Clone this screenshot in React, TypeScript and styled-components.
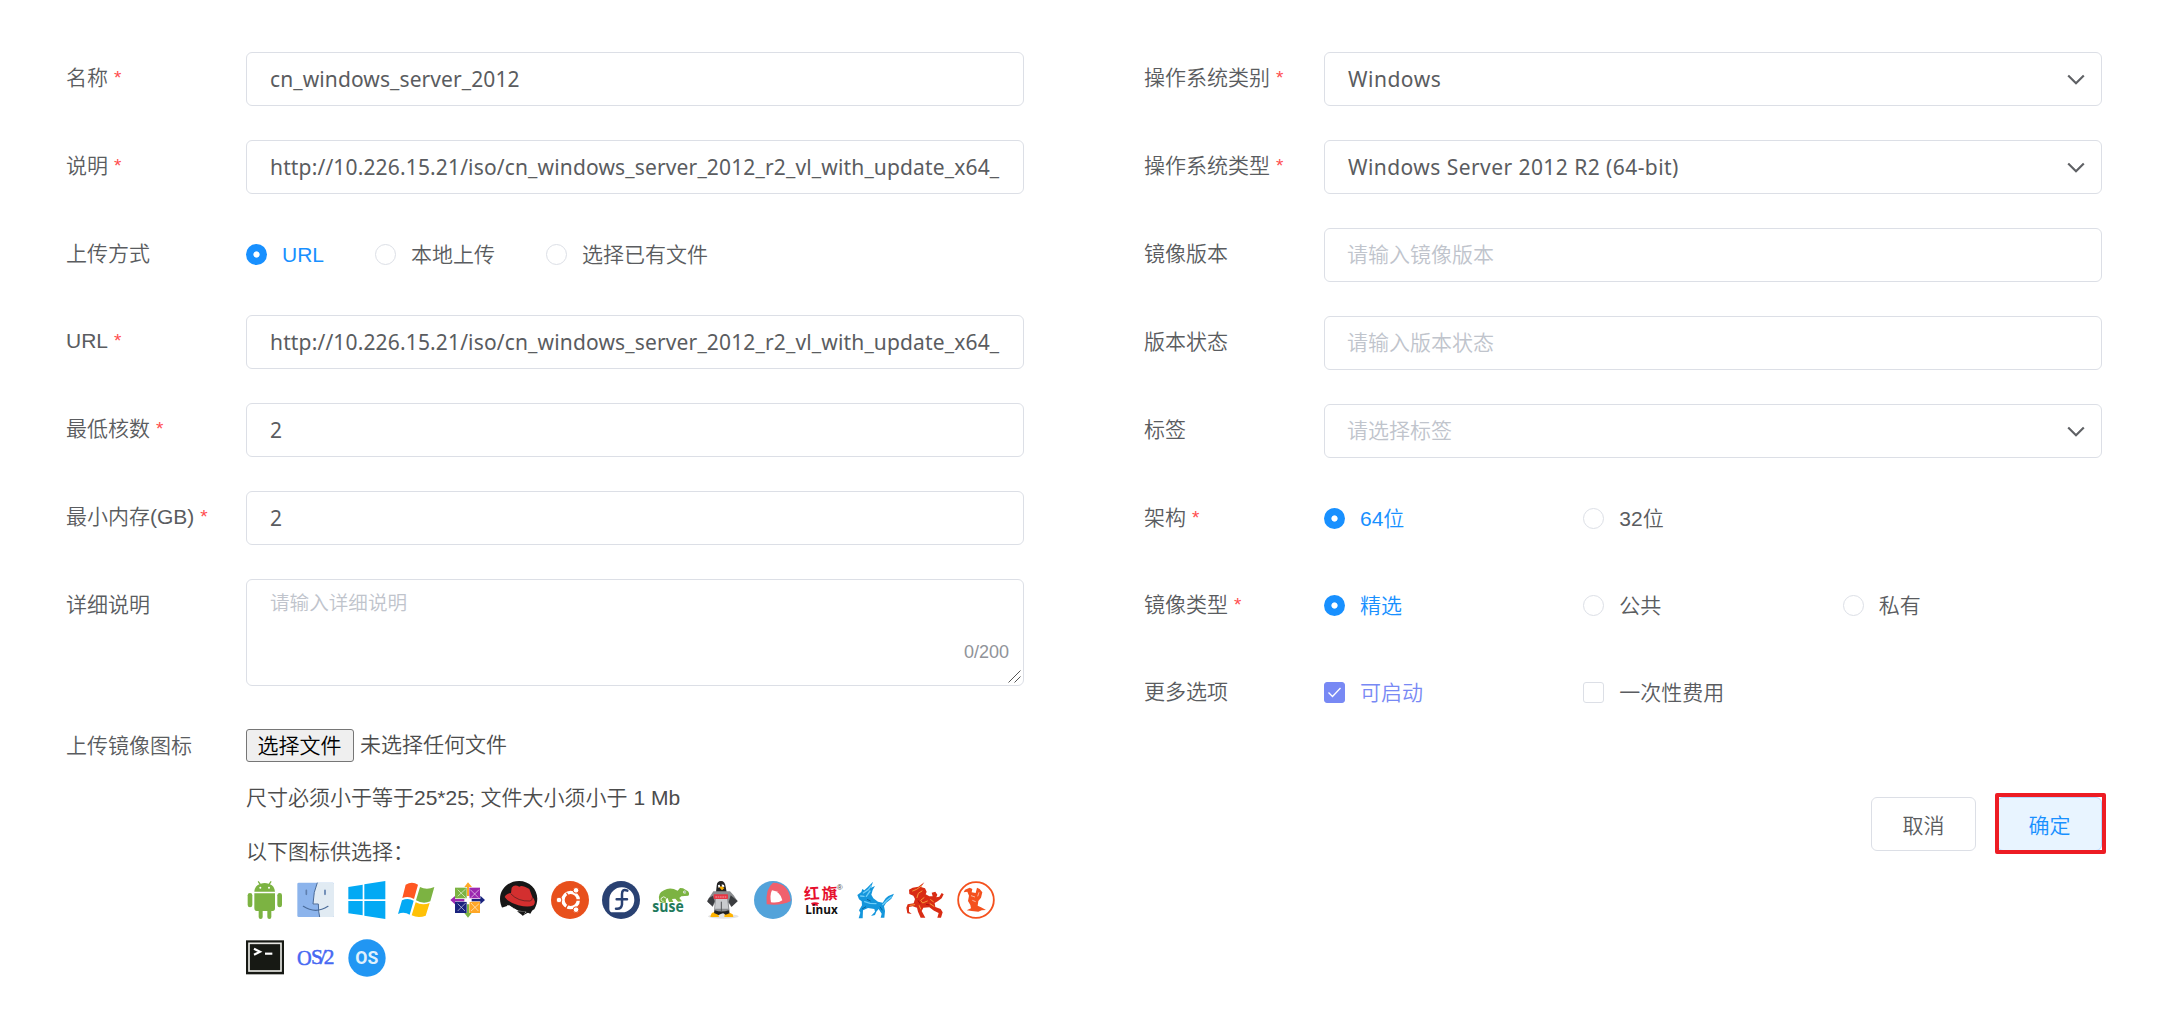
import React from 'react';
import styled, { createGlobalStyle, css } from 'styled-components';

const GlobalStyle = createGlobalStyle`
  *, *::before, *::after { box-sizing: border-box; }
  body {
    margin: 0;
    background: #fff;
    color: #5a5c60;
    font-family: "Liberation Sans", "Noto Sans CJK SC", sans-serif;
    font-size: 21px;
    font-weight: 350;
  }
`;

const Page = styled.main`
  display: grid;
  grid-template-columns: 958px 958px;
  column-gap: 120px;
  padding: 52px 74px 0 66px;
`;

const Column = styled.section`
  display: flex;
  flex-direction: column;
  gap: 34px;
`;

const Field = styled.div`
  display: grid;
  grid-template-columns: 180px 778px;
  align-items: start;
`;

const Label = styled.label`
  display: flex;
  height: 53px;
  line-height: 52px;
  white-space: nowrap;
`;

const Star = styled.span`
  color: #ff4d4f;
  font-size: 19px;
  line-height: 51px;
  margin-left: 6px;
`;

const Box = styled.div<{ $placeholder?: boolean; $tracking?: string }>`
  display: flex;
  align-items: center;
  justify-content: space-between;
  height: 54px;
  padding: 0 16px 0 23px;
  border: 1px solid #dcdfe6;
  border-radius: 6px;
  overflow: hidden;
  white-space: nowrap;
  font-family: "Noto Sans", "Noto Sans CJK SC", sans-serif;
  font-weight: 400;
  letter-spacing: ${(p) => p.$tracking ?? '0.15px'};
  ${(p) =>
    p.$placeholder &&
    css`
      padding-left: 22px;
      color: #c0c4cc;
      font-family: "Liberation Sans", "Noto Sans CJK SC", sans-serif;
      font-weight: 350;
      letter-spacing: 0;
      line-height: 52px;
    `}
`;

const TextArea = styled.div`
  position: relative;
  height: 107px;
  padding: 8px 23px;
  border: 1px solid #dcdfe6;
  border-radius: 6px;
  color: #c0c4cc;
  font-size: 19.6px;
  line-height: 30px;
`;

const Counter = styled.span`
  position: absolute;
  right: 14px;
  bottom: 18px;
  color: #909399;
  font-size: 18px;
  line-height: 30px;
`;

const Grip = styled.svg`
  position: absolute;
  right: 2px;
  bottom: 2px;
`;

const Inline = styled.div`
  display: flex;
  align-items: center;
  gap: 51px;
  height: 53px;
`;

const Thirds = styled.div`
  display: grid;
  grid-template-columns: repeat(3, 1fr);
  align-items: center;
  height: 53px;
`;

const Choice = styled.span<{ $color?: string }>`
  display: flex;
  align-items: center;
  gap: 15px;
  height: 53px;
  line-height: 52px;
  color: ${(p) => p.$color ?? '#5a5c60'};
`;

const Dot = styled.i<{ $on?: boolean }>`
  width: 21px;
  height: 21px;
  border-radius: 50%;
  ${(p) =>
    p.$on
      ? css`
          background: radial-gradient(circle, #fff 2.7px, #1890ff 3.5px);
        `
      : css`
          border: 1px solid #dcdfe6;
        `}
`;

const Check = styled.i<{ $on?: boolean }>`
  display: flex;
  width: 21px;
  height: 21px;
  border-radius: 3px;
  border: 1px solid ${(p) => (p.$on ? '#7889f4' : '#dcdfe6')};
  background: ${(p) => (p.$on ? '#7889f4' : '#fff')};
`;

const Upload = styled.div`
  color: #4c4c4c;
`;

const Line = styled.div<{ $height: number }>`
  display: flex;
  align-items: center;
  height: ${(p) => p.$height}px;
  line-height: 30px;
  white-space: pre;
  gap: 6px;
`;

const FileName = styled.span`
  margin-top: -1px;
`;

const FileButton = styled.button`
  width: 108px;
  height: 33px;
  padding: 0 1px 0 0;
  border: 1px solid #767676;
  border-radius: 3px;
  background: #efefef;
  color: #000;
  font: inherit;
  line-height: 29px;
`;

const Icons = styled.div`
  display: grid;
  grid-template-columns: repeat(15, 38px);
  gap: 20px 12.8px;
  margin-top: 2px;
  svg { display: block; width: 38px; height: 38px; overflow: visible; }
`;

const Actions = styled.div`
  display: flex;
  justify-content: flex-end;
  gap: 21px;
  margin-top: 44px;
`;

const Button = styled.button<{ $primary?: boolean }>`
  position: relative;
  width: 105px;
  height: 54px;
  padding: 0;
  border: 1px solid ${(p) => (p.$primary ? '#b3d8ff' : '#dcdfe6')};
  border-radius: 6px;
  background: ${(p) => (p.$primary ? '#e8f4ff' : '#fff')};
  color: ${(p) => (p.$primary ? '#1890ff' : '#5a5c60')};
  font: inherit;
`;

const Highlight = styled.span`
  position: absolute;
  left: -3px;
  top: -5px;
  width: 111px;
  height: 61px;
  border: 4px solid #ed1c24;
  border-radius: 2px;
`;

const Chevron = () => (
  <svg width="18" height="12" viewBox="0 0 18 12" fill="none" stroke="#606266" strokeWidth="2.2">
    <path d="M1.2 2.5 L9 10.3 L16.8 2.5" />
  </svg>
);

function Row({ label, required, children }: { label: string; required?: boolean; children: React.ReactNode }) {
  return (
    <Field>
      <Label>
        {label}
        {required && <Star>*</Star>}
      </Label>
      {children}
    </Field>
  );
}

function Radio({ on, children }: { on?: boolean; children: React.ReactNode }) {
  return (
    <Choice $color={on ? '#1890ff' : undefined}>
      <Dot $on={on} />
      {children}
    </Choice>
  );
}

const Svg = ({ children }: { children: React.ReactNode }) => <svg viewBox="0 0 114 114">{children}</svg>;

const Android = () => (
  <Svg>
    <g fill="#7cb342">
      <path d="M25 32C26 20 32 13 40 10L35 2L38 0L44 8Q56 4 68 8L74 0L77 2L72 10C80 13 86 20 87 32Z" />
      <path d="M25 37H87V82Q87 90 80 90H76V108Q76 114 70 114Q64 114 64 108V90H50V108Q50 114 44 114Q38 114 38 108V90H32Q25 90 25 82Z" />
      <rect x="5" y="36" width="14" height="43" rx="7" />
      <rect x="94" y="36" width="14" height="43" rx="7" />
    </g>
    <circle cx="43" cy="20" r="3" fill="#fff" />
    <circle cx="69" cy="20" r="3" fill="#fff" />
  </Svg>
);

const Finder = () => (
  <Svg>
    <rect x="1" y="5" width="110" height="103" rx="4" fill="#8cb4ec" />
    <path d="M61 5H107Q111 5 111 9V104Q111 108 107 108H68Q64 92 64 70H48Q50 32 61 5Z" fill="#e1ebf3" />
    <path d="M61 5Q49 32 48 69H64Q64 92 68 108" fill="none" stroke="#4a6b99" strokeWidth="3" />
    <path d="M19 76Q56 100 93 76" fill="none" stroke="#4a6b99" strokeWidth="3.5" strokeLinecap="round" />
    <path d="M28 28V40M84 28V40" stroke="#5f7fae" strokeWidth="5" strokeLinecap="round" />
  </Svg>
);

const Win8 = () => (
  <Svg>
    <path fill="#03a9f4" d="M1 18L44 11V55H1ZM49 10L112 0V55H49ZM1 60H44V103L1 97ZM49 60H112V114L49 104Z" />
  </Svg>
);

const WinXp = () => (
  <Svg>
    <path fill="#ff5722" d="M23 11Q42 0 60 11L48 54Q31 43 13 51Z" />
    <path fill="#7cb342" d="M66 18Q86 28 109 18L97 61Q75 71 54 58Z" />
    <path fill="#03a9f4" d="M12 58Q30 49 47 59L35 101Q18 90 0 99Z" />
    <path fill="#ffc107" d="M53 64Q73 75 95 66L83 104Q61 112 41 103Z" />
  </Svg>
);

const CentOs = () => (
  <Svg>
    <path fill="#7cb342" d="M18 20H53V52H18Z" />
    <path fill="#9c27b0" d="M61 20H93V52H61Z" />
    <path fill="#1a237e" d="M18 62H53V96H18Z" />
    <path fill="#ffa726" d="M61 62H93V96H61Z" />
    <path fill="#ffa726" d="M57 4L69 18H60V48H54V18H46Z" />
    <path fill="#1a237e" d="M108 57L94 70V61H66V54H94V44Z" />
    <path fill="#7cb342" d="M57 110L46 96H54V66H60V96H68Z" />
    <path fill="#9c27b0" d="M4 57L18 45V54H48V61H18V70Z" />
    <path
      d="M26 46L50 24M26 26L50 50M66 50L90 26M64 26L88 50M26 90L50 66M26 68L48 90M66 66L88 90M66 90L90 68"
      stroke="#fff"
      strokeWidth="2"
      opacity=".85"
    />
    <path d="M54 45H61V53H68V62H61V70H54V62H46V53H54Z" fill="#fff" />
  </Svg>
);

const RedHat = () => (
  <Svg>
    <path fill="#171717" d="M9 85C-16 42 15 0 57 0C99 0 127 43 103 85L82 96L67 104L70 94L55 90L35 79Z" />
    <path fill="#fff" d="M20 71L35 78L55 89L77 91L97 89L78 94L73 98L61 92L48 91L40 82L28 82Z" />
    <path fill="#d32f2f" d="M35 20Q43 9 58 17Q65 10 88 24L97 48Q110 60 101 73Q86 80 55 73Q25 64 14 48Q17 38 33 36Z" />
    <path fill="none" stroke="#171717" strokeWidth="3" d="M32 38Q54 62 90 60Q98 58 97 49" opacity=".5" />
    <path fill="#fff" d="M5 80L28 73L35 78L28 84L32 88L42 84L40 93L51 93L71 114H20Z" />
    <path fill="#171717" d="M51 91L78 91L101 81L91 98L77 92L69 104Z" />
  </Svg>
);

const Ubuntu = () => (
  <Svg>
    <circle cx="57" cy="57" r="57" fill="#e8501c" />
    <circle cx="59" cy="57" r="23" fill="none" stroke="#fff" strokeWidth="10" />
    <path d="M59 57L34 57M59 57L74 31M59 57L74 83" stroke="#e8501c" strokeWidth="4" transform="rotate(60 59 57)" />
    <g fill="#fff" stroke="#e8501c" strokeWidth="3">
      <circle cx="24" cy="57" r="8.5" />
      <circle cx="75" cy="28" r="8.5" />
      <circle cx="75" cy="86" r="8.5" />
    </g>
  </Svg>
);

const Fedora = () => (
  <Svg>
    <circle cx="57" cy="57" r="57" fill="#294172" />
    <path fill="#fff" d="M22 55A37.5 37.5 0 1 1 60 94H32Q22 94 22 83Z" />
    <path
      d="M76 29Q60 22 60 39V70Q58 85 42 83M44 55H75"
      fill="none"
      stroke="#294172"
      strokeWidth="7.5"
      strokeLinecap="round"
    />
  </Svg>
);

const Suse = () => (
  <Svg>
    <path
      fill="#7cb342"
      d="M22 60Q15 37 36 28Q54 16 77 29L84 21L93 22L108 31Q114 39 109 44L88 46L82 51L90 61L78 62L70 53L60 54L64 63H51L47 51Q38 54 43 65H34Q25 67 22 60Z"
    />
    <path d="M43 52Q35 43 28 51Q25 61 35 61" fill="none" stroke="#fff" strokeWidth="2.4" />
    <circle cx="98" cy="33" r="4.5" fill="#fff" />
    <circle cx="99" cy="33" r="2" fill="#33691e" />
    <text x="1" y="92" textLength="94" lengthAdjust="spacingAndGlyphs" fontFamily="Open Sans, sans-serif" fontSize="47" fontWeight="700" fill="#1f7a5c">
      suse
    </text>
  </Svg>
);

const Tux = () => (
  <Svg>
    <ellipse cx="61" cy="106" rx="46" ry="7" fill="#e3e3e3" />
    <path fill="#242424" d="M41 14Q42 0 54 0Q66 0 68 17L71 34H39Z" />
    <path fill="#8b8d90" d="M31 31L81 31L92 43L104 61L85 78L77 66L80 92Q56 104 33 92L35 65L29 78L12 60Z" />
    <path fill="#3b3d40" d="M18 51L30 44L35 61L29 76L13 62ZM83 43L104 60L86 77L77 63Z" />
    <path fill="#c9cbce" d="M39 50H72L76 83H36Z" />
    <path fill="#ffb300" d="M48 18L56 16L64 21L57 28ZM25 98Q33 89 46 99L48 108H22ZM65 99Q75 89 89 100L91 108H64Z" />
    <path fill="#fff" d="M45 12L50 11L52 17L46 20ZM56 10L63 12L64 18L57 17Z" />
    <rect x="32" y="40" width="43" height="14" rx="2" fill="#e53946" />
    <path d="M37 48H70" stroke="#fff" strokeWidth="3" strokeDasharray="5 2" opacity=".5" />
    <path d="M55 62V91" stroke="#55575a" strokeWidth="3" />
    <path fill="#222" d="M35 88Q56 95 77 88L80 97L68 101L60 96L47 102L33 96Z" />
  </Svg>
);

const CoreOs = () => (
  <Svg>
    <circle cx="57" cy="57" r="57" fill="#53a3da" />
    <path fill="#f0606d" d="M57 5Q105 5 110 60Q82 75 38 70Q33 24 57 5Z" />
    <path fill="#fff" d="M54 28Q79 31 85 58Q74 67 51 64Q47 42 54 28Z" />
  </Svg>
);

const RedFlag = () => (
  <Svg>
    <g fontFamily="Noto Sans CJK SC, sans-serif" fontSize="47" fontWeight="700" fill="#e60f2d">
      <text x="-3" y="55" transform="rotate(-4 20 40)">红</text>
      <text x="51" y="55" transform="rotate(-4 75 40)">旗</text>
    </g>
    <text x="95" y="28" fontFamily="Liberation Sans, sans-serif" fontSize="24" fill="#444">
      ®
    </text>
    <path fill="#e60f2d" d="M18 66Q31 61 43 67L37 71L40 76Q28 71 23 75Z" />
    <text x="1" y="99" textLength="97" lengthAdjust="spacingAndGlyphs" fontFamily="Open Sans, sans-serif" fontSize="38" fontWeight="700" fill="#111">
      Linux
    </text>
  </Svg>
);

const BlueKylin = () => (
  <Svg>
    <path
      fill="#1496dc"
      d="M51 2L45 20L57 15L50 27L46 41L52 52L66 62L80 65L89 52L97 45L114 38L106 53L90 66L84 76L87 90L85 110H74L77 98L68 84L61 92L57 102L45 105L57 92L55 84L36 81L21 88L20 112H8L13 95L9 88L18 73L17 61L9 55L4 42L16 33L19 24L25 28L35 19Z"
    />
    <path d="M46 14L37 26L22 36M42 30L31 46M26 62L42 67L60 68M80 71L93 58L106 48M14 45L24 46" fill="none" stroke="#6ecdf8" strokeWidth="4" strokeLinecap="round" />
    <path d="M18 84L30 77M72 77L79 88M33 55L44 60" fill="none" stroke="#07659f" strokeWidth="3" />
  </Svg>
);

const RedKylin = () => (
  <Svg>
    <path
      fill="#d92c14"
      d="M55 4L45 18L57 22L62 32L59 40L70 46L80 46L77 35L88 32L94 41L91 49L100 47L107 36L113 40L107 52L95 61L86 66L88 78L104 84L110 94L105 110H94L98 96L84 89L70 79L52 80L47 90L58 110H44L36 92L33 80L20 76L9 78L9 92L17 99L4 97L1 80L5 70L23 67L27 54L22 44L10 39L9 26L20 20L37 17Z"
    />
    <path d="M47 14L32 25L20 30M48 30L37 37L33 50M54 50L44 58L50 66L64 60M74 56L82 62M72 68L84 76M12 73L26 71M40 74L44 84" fill="none" stroke="#f79a3a" strokeWidth="3" strokeLinecap="round" />
    <path d="M36 58L42 68M60 70L70 72" fill="none" stroke="#a80f0d" strokeWidth="3" />
  </Svg>
);

const RedEmblem = () => (
  <Svg>
    <circle cx="57" cy="57" r="53.5" fill="#fff" stroke="#f4511e" strokeWidth="5.5" />
    <path
      fill="#f4511e"
      d="M31 32L20 34L24 26L38 20L46 24L44 34L56 36L60 20L68 24L76 34L72 50L64 60L62 74L72 79L87 87L74 88L64 92L44 90L29 88L42 82L40 72L33 60L36 44Z"
    />
    <path d="M66 34L62 46M42 44L54 48M46 58L56 62" fill="none" stroke="#fff" strokeWidth="2.5" opacity=".7" />
  </Svg>
);

const Terminal = () => (
  <Svg>
    <rect y="4" width="114" height="102" fill="#171914" />
    <rect x="9" y="13" width="96" height="83" fill="none" stroke="#e8e8e3" strokeWidth="5" />
    <path d="M24 29L42 38L24 47" fill="none" stroke="#fff" strokeWidth="6.5" />
    <path d="M57 44H79" stroke="#fff" strokeWidth="6.5" />
  </Svg>
);

const Os2 = () => (
  <Svg>
    <g fontFamily="Liberation Serif, serif" fill="#4668f2" stroke="#4668f2" strokeWidth="1.5" fontSize="64">
      <text x="0" y="79" textLength="44" lengthAdjust="spacingAndGlyphs">O</text>
      <text x="42" y="74" textLength="36" lengthAdjust="spacingAndGlyphs">S</text>
      <text x="69" y="75" textLength="18" lengthAdjust="spacingAndGlyphs">/</text>
      <text x="80" y="75" textLength="32" lengthAdjust="spacingAndGlyphs">2</text>
    </g>
  </Svg>
);

const Os = () => (
  <Svg>
    <circle cx="57" cy="57" r="56" fill="#2196f3" />
    <text x="22" y="75" textLength="69" lengthAdjust="spacingAndGlyphs" fontFamily="Roboto, sans-serif" fontSize="55" fontWeight="700" fill="#dff0fd">
      OS
    </text>
  </Svg>
);

const osIcons = [
  Android, Finder, Win8, WinXp, CentOs, RedHat, Ubuntu, Fedora, Suse, Tux,
  CoreOs, RedFlag, BlueKylin, RedKylin, RedEmblem, Terminal, Os2, Os,
];

const isoUrl = 'http://10.226.15.21/iso/cn_windows_server_2012_r2_vl_with_update_x64_';

export default function App() {
  return (
    <>
      <GlobalStyle />
      <Page>
        <Column>
          <Row label="名称" required>
            <Box $tracking="0.1px">cn_windows_server_2012</Box>
          </Row>
          <Row label="说明" required>
            <Box>{isoUrl}</Box>
          </Row>
          <Row label="上传方式">
            <Inline>
              <Radio on>URL</Radio>
              <Radio>本地上传</Radio>
              <Radio>选择已有文件</Radio>
            </Inline>
          </Row>
          <Row label="URL" required>
            <Box>{isoUrl}</Box>
          </Row>
          <Row label="最低核数" required>
            <Box>2</Box>
          </Row>
          <Row label="最小内存(GB)" required>
            <Box>2</Box>
          </Row>
          <Row label="详细说明">
            <TextArea>
              请输入详细说明
              <Counter>0/200</Counter>
              <Grip width="13" height="13" viewBox="0 0 13 13" stroke="#555" strokeWidth="1">
                <path d="M0.5 12.5L12.5 0.5M6.5 12.5L12.5 6.5" />
              </Grip>
            </TextArea>
          </Row>
          <Row label="上传镜像图标">
            <Upload>
              <Line $height={51}>
                <FileButton>选择文件</FileButton>
                <FileName>未选择任何文件</FileName>
              </Line>
              <Line $height={54}>尺寸必须小于等于25*25; 文件大小须小于 1 Mb</Line>
              <Line $height={54}>以下图标供选择：</Line>
              <Icons>
                {osIcons.map((Icon, i) => (
                  <Icon key={i} />
                ))}
              </Icons>
            </Upload>
          </Row>
        </Column>
        <Column>
          <Row label="操作系统类别" required>
            <Box $tracking="0.5px">
              Windows
              <Chevron />
            </Box>
          </Row>
          <Row label="操作系统类型" required>
            <Box $tracking="0.44px">
              Windows Server 2012 R2 (64-bit)
              <Chevron />
            </Box>
          </Row>
          <Row label="镜像版本">
            <Box $placeholder>请输入镜像版本</Box>
          </Row>
          <Row label="版本状态">
            <Box $placeholder>请输入版本状态</Box>
          </Row>
          <Row label="标签">
            <Box $placeholder>
              请选择标签
              <Chevron />
            </Box>
          </Row>
          <Row label="架构" required>
            <Thirds>
              <Radio on>64位</Radio>
              <Radio>32位</Radio>
            </Thirds>
          </Row>
          <Row label="镜像类型" required>
            <Thirds>
              <Radio on>精选</Radio>
              <Radio>公共</Radio>
              <Radio>私有</Radio>
            </Thirds>
          </Row>
          <Row label="更多选项">
            <Thirds>
              <Choice $color="#7889f4">
                <Check $on>
                  <svg width="19" height="19" viewBox="0 0 19 19" fill="none" stroke="#fff" strokeWidth="1.3">
                    <path d="M3.5 9.5L7.5 13.5L15.5 5" />
                  </svg>
                </Check>
                可启动
              </Choice>
              <Choice>
                <Check />
                一次性费用
              </Choice>
            </Thirds>
          </Row>
          <Actions>
            <Button>取消</Button>
            <Button $primary>
              确定
              <Highlight />
            </Button>
          </Actions>
        </Column>
      </Page>
    </>
  );
}
